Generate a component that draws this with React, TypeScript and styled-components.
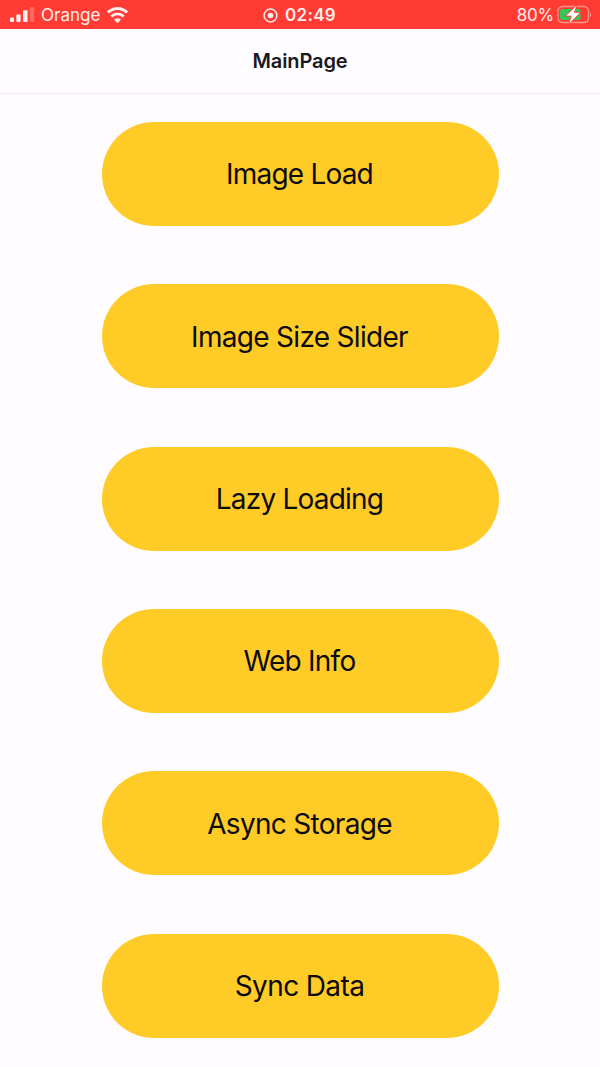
import React from "react";
import styled, { createGlobalStyle } from "styled-components";

const GlobalStyle = createGlobalStyle`
  * { box-sizing: border-box; }
  body { margin: 0; background: #fefcff; font-family: Inter, "Liberation Sans", sans-serif; }
`;

const Screen = styled.div`
  width: 600px;
  height: 1067px;
  overflow: hidden;
  background: #fefcff;
  color: #111;
`;

const StatusBar = styled.header`
  display: grid;
  grid-template-columns: 1fr auto 1fr;
  align-items: center;
  height: 29px;
  padding: 1px 7px 0 6px;
  background: #ff3b33;
  color: #ffeeec;
`;

const StatusGroup = styled.div<{ $end?: boolean }>`
  display: flex;
  align-items: center;
  justify-content: ${(p) => (p.$end ? "flex-end" : "flex-start")};
`;

const StatusText = styled.span<{ $spacing?: number; $bold?: boolean }>`
  font-size: 17px;
  line-height: 28px;
  font-weight: ${(p) => (p.$bold ? 600 : 400)};
  letter-spacing: ${(p) => p.$spacing ?? 0}px;
  white-space: nowrap;
`;

const Icon = styled.svg<{ $left?: number; $right?: number }>`
  display: block;
  flex: none;
  margin-left: ${(p) => p.$left ?? 0}px;
  margin-right: ${(p) => p.$right ?? 0}px;
`;

const TitleBar = styled.div`
  display: flex;
  align-items: center;
  justify-content: center;
  height: 65px;
  padding-bottom: 1px;
  border-bottom: 1px solid #efedf0;
`;

const Title = styled.h1`
  margin: 0;
  font-size: 20px;
  line-height: 24px;
  font-weight: 600;
  letter-spacing: -0.1px;
  color: #1b191d;
`;

const Menu = styled.main`
  display: flex;
  flex-direction: column;
  align-items: center;
  gap: 58.35px;
  padding-top: 28px;
`;

const MenuButton = styled.button<{ $spacing: number }>`
  flex: none;
  width: 397px;
  height: 104px;
  padding: 0.6px 1px 0 0;
  border: 0;
  border-radius: 52px;
  background: #ffcb27;
  color: #0c0b0d;
  font-family: inherit;
  font-size: 28px;
  line-height: 34px;
  font-weight: 400;
  letter-spacing: ${(p) => p.$spacing}px;
`;

const items = [
  { label: "Image Load", spacing: -0.8 },
  { label: "Image Size Slider", spacing: -0.7 },
  { label: "Lazy Loading", spacing: -0.78 },
  { label: "Web Info", spacing: -0.75 },
  { label: "Async Storage", spacing: -0.7 },
  { label: "Sync Data", spacing: -0.62 },
];

const SignalIcon = () => (
  <Icon $left={3} $right={6} width="26" height="16" viewBox="0 0 26 16" fill="currentColor">
    <rect x="1" y="10.5" width="4" height="4.5" rx="1" />
    <rect x="7.3" y="7.4" width="4.3" height="7.6" rx="1" />
    <rect x="14" y="3.2" width="4.6" height="11.8" rx="1" />
    <rect x="20.8" y="0" width="4.4" height="15" rx="1" opacity="0.25" />
  </Icon>
);

const WifiIcon = () => (
  <Icon $left={6} width="23" height="19" viewBox="0 0 23 19" fill="none" stroke="currentColor" strokeWidth="3">
    <path d="M1.9 6.5C7.3 1 15.7 1 21.1 6.5" />
    <path d="M5.3 10.5c3.7-3.5 8.7-3.5 12.4 0" />
    <path d="M8 13.6c2-1.8 5-1.8 7 0L11.5 17.2z" fill="currentColor" stroke="none" />
  </Icon>
);

const RecordIcon = () => (
  <Icon $right={7} width="15" height="15" viewBox="0 0 15 15">
    <circle cx="7.5" cy="7.5" r="6.4" fill="none" stroke="currentColor" strokeWidth="1.5" />
    <circle cx="7.5" cy="7.5" r="2.8" fill="currentColor" />
  </Icon>
);

const BatteryIcon = () => (
  <Icon $left={3} width="36" height="20" viewBox="0 0 36 20">
    <rect x="1" y="1.5" width="30.5" height="16" rx="4.5" fill="none" stroke="#ff958d" strokeWidth="1.3" />
    <path d="M33 7.2q2.4 2.5 0 5z" fill="#ff958d" />
    <rect x="3" y="4" width="20.5" height="11" rx="2.5" fill="#36c759" />
    <path d="M19.5.8 9.2 10.8h5.6l-2.6 7.8L22.8 7.8h-6z" fill="#fff" stroke="#ff3b33" strokeWidth="1.4" paintOrder="stroke" />
  </Icon>
);

export default function App() {
  return (
    <Screen>
      <GlobalStyle />
      <StatusBar>
        <StatusGroup>
          <SignalIcon />
          <StatusText>Orange</StatusText>
          <WifiIcon />
        </StatusGroup>
        <StatusGroup>
          <RecordIcon />
          <StatusText $bold $spacing={0.3}>02:49</StatusText>
        </StatusGroup>
        <StatusGroup $end>
          <StatusText $spacing={-0.2}>80%</StatusText>
          <BatteryIcon />
        </StatusGroup>
      </StatusBar>
      <TitleBar>
        <Title>MainPage</Title>
      </TitleBar>
      <Menu>
        {items.map((item) => (
          <MenuButton key={item.label} type="button" $spacing={item.spacing}>
            {item.label}
          </MenuButton>
        ))}
      </Menu>
    </Screen>
  );
}
